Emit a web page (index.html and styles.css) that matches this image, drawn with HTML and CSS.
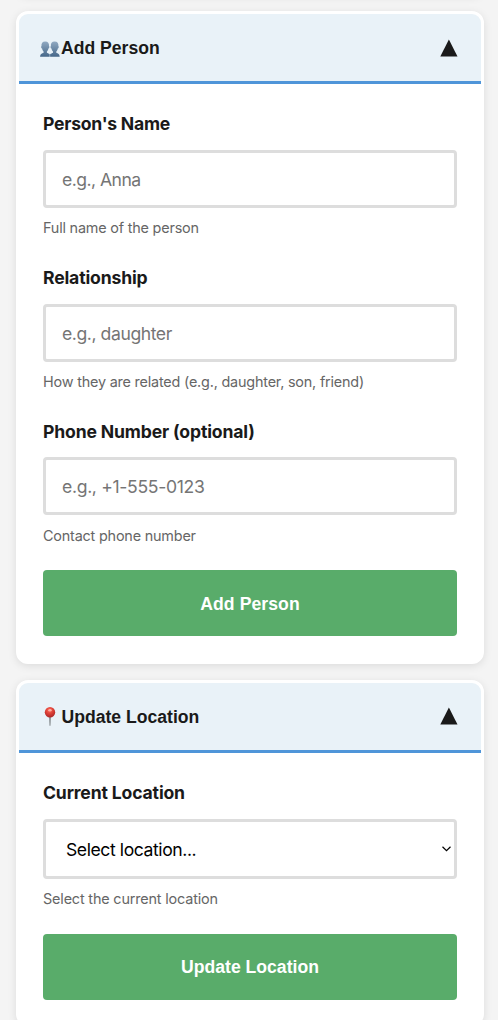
FILE: index.html
```html
<!DOCTYPE html>
<html lang="en">
<head>
<meta charset="utf-8">
<meta name="viewport" content="width=device-width, initial-scale=1">
<title>Add Person</title>
<link rel="stylesheet" href="styles.css">
</head>
<body>
<main class="page">
  <div class="card card-previous"></div>
  <section class="card card-person">
    <header class="card-header">
      <h2 class="card-title">
        <svg class="icon-people" width="20" height="18" viewBox="0 0 20 18" aria-hidden="true">
          <defs><linearGradient id="people" x1="0" y1="0" x2="0" y2="1"><stop offset="0" stop-color="#91aac2"/><stop offset="1" stop-color="#456789"/></linearGradient></defs>
          <path fill="url(#people)" d="M5.200 2.500C2.400 2.500 1.200 4.500 1.500 7C.8 7.600 1.200 9.300 2.100 9.600C2.300 11 2.900 12 3.600 12.500V13.800C2 14.600 .3 14.800 .1 17.700H9.700V15.200C9 14.500 7.700 14.400 6.900 13.800V12.500C7.600 12 8.200 11 8.400 9.600C9.300 9.300 9.700 7.600 9 7C9.300 4.500 8 2.500 5.200 2.500Z"/>
          <path fill="url(#people)" d="M14.600 2.500C11.800 2.500 10.600 4.500 10.900 7C10.200 7.600 10.600 9.300 11.500 9.600C11.700 11 12.300 12 13 12.500V13.800C12.200 14.400 10.900 14.500 10.100 15.200V17.700H19.700C19.500 14.800 17.900 14.600 16.300 13.800V12.500C17 12 17.600 11 17.800 9.600C18.700 9.300 19.100 7.600 18.400 7C18.700 4.500 17.400 2.500 14.600 2.500Z"/>
        </svg>
        <span>Add Person</span>
      </h2>
      <svg class="toggle" width="18" height="18" viewBox="0 0 18 18" aria-hidden="true"><path d="M8.900 .5L17.500 17.400H.3Z"/></svg>
    </header>
    <form class="card-body">
      <div class="field">
        <label class="label label-name" for="name">Person's Name</label>
        <input class="control control-name" id="name" type="text" placeholder="e.g., Anna">
        <p class="help">Full name of the person</p>
      </div>
      <div class="field field-relationship">
        <label class="label" for="relationship">Relationship</label>
        <input class="control" id="relationship" type="text" placeholder="e.g., daughter">
        <p class="help">How they are related (e.g., daughter, son, friend)</p>
      </div>
      <div class="field field-phone">
        <label class="label" for="phone">Phone Number (optional)</label>
        <input class="control control-phone" id="phone" type="tel" placeholder="e.g., +1-555-0123">
        <p class="help">Contact phone number</p>
      </div>
      <button class="button button-person" type="button">Add Person</button>
    </form>
  </section>
  <section class="card card-location">
    <header class="card-header">
      <h2 class="card-title">
        <svg class="icon-pin" width="22" height="20" viewBox="0 0 22 20" aria-hidden="true">
          <defs><radialGradient id="pin" cx=".45" cy=".3" r=".7"><stop offset="0" stop-color="#ff6b5a"/><stop offset=".5" stop-color="#dc4037"/><stop offset="1" stop-color="#ad2728"/></radialGradient></defs>
          <path d="M10.100 10H11.900L11.500 18.800H10.500Z" fill="#858b8e"/>
          <circle cx="11" cy="5.200" r="5.200" fill="url(#pin)"/>
          <ellipse cx="11" cy="3.200" rx="1.700" ry="1.300" fill="#ffc2b5" opacity=".8"/>
        </svg>
        <span>Update Location</span>
      </h2>
      <svg class="toggle" width="18" height="18" viewBox="0 0 18 18" aria-hidden="true"><path d="M8.900 .5L17.500 17.400H.3Z"/></svg>
    </header>
    <form class="card-body">
      <div class="field field-select">
        <label class="label" for="location">Current Location</label>
        <div class="select-wrap">
          <select class="control select" id="location"><option>Select location...</option></select>
          <svg class="chevron" width="10" height="6" viewBox="0 0 10 6" aria-hidden="true"><path d="M.5 .8L4.500 4.700L8.500 .8"/></svg>
        </div>
        <p class="help help-location">Select the current location</p>
      </div>
      <button class="button" type="button">Update Location</button>
    </form>
  </section>
</main>
</body>
</html>
```

FILE: styles.css
```css
* { box-sizing: border-box; }
html, body { height: 100%; }
body {
  margin: 0;
  overflow: hidden;
  background: #f4f4f4;
  color: #1a1a1a;
  font-family: Inter, "Liberation Sans", sans-serif;
}
.page { display: flex; flex-direction: column; gap: 16px; padding: 0 14px 0 16px; }
.card {
  flex: none;
  overflow: hidden;
  border: 3px solid #fff;
  border-radius: 12px;
  background: #fff;
  box-shadow: 0 2px 8px rgba(0, 0, 0, .1);
}
.card-previous { height: 35px; margin-top: -40px; }
.card-person { height: 652.500px; }
.card-location { height: 346px; }
.card-header {
  display: flex;
  align-items: center;
  justify-content: space-between;
  height: 70.300px;
  padding: 0 23px 0 21px;
  border-bottom: 3px solid #4f95d9;
  background: #e9f2f8;
}
.card-title {
  display: flex;
  align-items: center;
  margin: 0;
  font: bold 17.600px/26px "Liberation Sans", Arial, sans-serif;
}
.icon-people { margin-right: 1px; }
.icon-pin { margin: 0 .500px 0 -1px; }
.card-location .card-title { padding-top: 1px; }
.toggle { fill: #1a1a1a; }
.card-body { padding: 25px 24px 24px; }
.field { height: 153.800px; }
.field-phone { height: 153.300px; }
.field-select { height: 156.500px; }
.label {
  display: block;
  margin-bottom: 11px;
  font-size: 17.600px;
  font-weight: 700;
  letter-spacing: -.16px;
  line-height: 30px;
}
.label-name { letter-spacing: -.24px; }
.control {
  display: block;
  width: 100%;
  height: 58px;
  padding: 1px 16px 0;
  border: 3px solid #ddd;
  border-radius: 4px;
  outline: none;
  background: #fff;
  color: #000;
  font: 17.600px Inter, "Liberation Sans", sans-serif;
  letter-spacing: -.43px;
}
.control-name { letter-spacing: -.54px; }
.control-phone { padding-top: 0; letter-spacing: -.33px; }
.control::placeholder { color: #757575; opacity: 1; }
.select-wrap { position: relative; }
.select { height: 60px; padding: 2px 20px 0; appearance: none; }
.chevron { position: absolute; top: 27px; right: 5px; fill: none; stroke: #000; stroke-width: 1.200; }
.help { margin: 9px 0 0; color: #666; font-size: 14.400px; letter-spacing: -.19px; line-height: 22px; }
.field-phone .label { margin-bottom: 10.500px; }
.field-phone .help { margin-top: 9.500px; }
.help-location { letter-spacing: -.16px; }
.button {
  display: block;
  width: 100%;
  height: 66px;
  padding: 1px 0 0;
  border: 0;
  border-radius: 4px;
  background: #59ac6a;
  color: #fff;
  font: bold 17.600px "Liberation Sans", Arial, sans-serif;
}
.button-person { padding-top: 2px; letter-spacing: .08px; }
```
